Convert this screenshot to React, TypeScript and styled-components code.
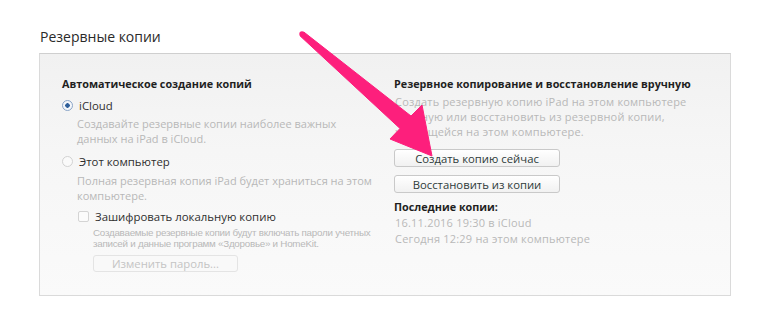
import React from 'react';
import styled, {createGlobalStyle} from 'styled-components';

const GlobalStyle = createGlobalStyle`
  html, body {
    margin: 0;
    padding: 0;
    background: #ffffff;
  }
  body {
    font-family: 'Open Sans', 'Noto Sans', sans-serif;
    color: #2b2b2b;
  }
`;

const Page = styled.div`
  position: relative;
  width: 770px;
  height: 330px;
  padding: 29px 0 0 39px;
  box-sizing: border-box;
  overflow: hidden;
`;

const PageTitle = styled.div`
  padding-left: 1px;
  font-size: 14px;
  line-height: 16px;
  color: #2a2a2a;
  margin-bottom: 8px;
`;

const Panel = styled.div`
  width: 692px;
  height: 243px;
  box-sizing: border-box;
  border: 1px solid #dadada;
  border-top-color: #cfcfcf;
  background: linear-gradient(180deg, #f1f1f1 0%, #f6f6f6 40%, #fafafa 100%);
  display: grid;
  grid-template-columns: 332px 1fr;
  padding: 22px 0 0 22px;
`;

const Column = styled.div`
  display: flex;
  flex-direction: column;
  align-items: flex-start;
`;

const Heading = styled.div<{$gap?: number}>`
  font-size: 10.8px;
  font-weight: bold;
  line-height: 15px;
  color: #1f1f1f;
  margin-top: ${(p) => p.$gap ?? 0}px;
  white-space: nowrap;
`;

const OptionRow = styled.div<{$gap: number; $indent?: number}>`
  display: flex;
  align-items: center;
  gap: 6px;
  margin-top: ${(p) => p.$gap}px;
  margin-left: ${(p) => p.$indent ?? 0}px;
  font-size: 11.4px;
  line-height: 15px;
  color: #2f2f2f;
`;

const Radio = styled.span<{$checked?: boolean}>`
  width: 9px;
  height: 9px;
  border-radius: 50%;
  border: 1px solid ${(p) => (p.$checked ? '#8aa5c8' : '#d2d2d2')};
  background: ${(p) =>
    p.$checked ? 'radial-gradient(circle, #2f5f9a 0 2px, #f4f6fa 2.5px)' : '#fafafa'};
  box-sizing: content-box;
  flex: none;
`;

const Checkbox = styled.span`
  width: 9px;
  height: 9px;
  border: 1px solid #d4d4d4;
  border-radius: 2px;
  background: #fbfbfb;
  flex: none;
`;

const Description = styled.div<{$gap: number; $indent?: number}>`
  margin-top: ${(p) => p.$gap}px;
  margin-left: ${(p) => p.$indent ?? 0}px;
  font-size: 11px;
  line-height: 15px;
  color: #b8b8b8;
  white-space: nowrap;
`;

const SmallNote = styled.div`
  margin-top: 3px;
  margin-left: 31px;
  font-family: 'Liberation Sans', Arial, sans-serif;
  font-size: 9.8px;
  line-height: 11px;
  letter-spacing: -0.25px;
  color: #b8b8b8;
  white-space: nowrap;
`;

const Button = styled.div<{
  $width: number;
  $gap: number;
  $indent?: number;
  $disabled?: boolean;
}>`
  width: ${(p) => p.$width}px;
  height: ${(p) => (p.$disabled ? 17 : 18)}px;
  box-sizing: border-box;
  margin-top: ${(p) => p.$gap}px;
  margin-left: ${(p) => p.$indent ?? 0}px;
  border: 1px solid ${(p) => (p.$disabled ? '#e4e4e4' : '#c9c9c9')};
  border-radius: 3px;
  background: ${(p) =>
    p.$disabled ? '#f9f9f9' : 'linear-gradient(180deg, #ffffff 0%, #f1f1f1 100%)'};
  display: flex;
  align-items: center;
  justify-content: center;
  font-size: 11.3px;
  color: ${(p) => (p.$disabled ? '#c4c4c4' : '#2e3b3a')};
`;

const RightText = styled.div<{$gap: number; $muted?: boolean; $line?: number}>`
  margin-top: ${(p) => p.$gap}px;
  padding-left: 1px;
  font-size: 11px;
  line-height: ${(p) => p.$line ?? 15}px;
  letter-spacing: 0.2px;
  color: ${(p) => (p.$muted ? '#b8b8b8' : '#2b2b2b')};
  white-space: nowrap;
`;

const ArrowLayer = styled.svg`
  position: absolute;
  left: 0;
  top: 0;
  pointer-events: none;
`;

const PinkArrow = () => (
  <ArrowLayer width="770" height="330" viewBox="0 0 770 330">
    <circle cx="302" cy="34" r="2.7" fill="#fd1f7c" />
    <polygon
      points="303.8,32 411,116 422,105 432,156 390,139 400,128.5 300.2,36"
      fill="#fd1f7c"
      stroke="#fd1f7c"
      strokeWidth="1"
      strokeLinejoin="round"
    />
  </ArrowLayer>
);

export default function App() {
  return (
    <Page>
      <GlobalStyle />
      <PageTitle>Резервные копии</PageTitle>
      <Panel>
        <Column>
          <Heading>Автоматическое создание копий</Heading>
          <OptionRow $gap={7}>
            <Radio $checked />
            <span>iCloud</span>
          </OptionRow>
          <Description $gap={3} $indent={15}>
            Создавайте резервные копии наиболее важных
            <br />
            данных на iPad в iCloud.
          </Description>
          <OptionRow $gap={8}>
            <Radio />
            <span>Этот компьютер</span>
          </OptionRow>
          <Description $gap={4} $indent={15}>
            Полная резервная копия iPad будет храниться на этом
            <br />
            компьютере.
          </Description>
          <OptionRow $gap={6} $indent={16}>
            <Checkbox />
            <span>Зашифровать локальную копию</span>
          </OptionRow>
          <SmallNote>
            Создаваемые резервные копии будут включать пароли учетных
            <br />
            записей и данные программ «Здоровье» и HomeKit.
          </SmallNote>
          <Button $width={145} $gap={6} $indent={31} $disabled>
            Изменить пароль...
          </Button>
        </Column>
        <Column>
          <Heading>Резервное копирование и восстановление вручную</Heading>
          <RightText $gap={3} $muted>
            Создать резервную копию iPad на этом компьютере
            <br />
            вручную или восстановить из резервной копии,
            <br />
            хранящейся на этом компьютере.
          </RightText>
          <Button $width={166} $gap={10}>
            Создать копию сейчас
          </Button>
          <Button $width={166} $gap={8}>
            Восстановить из копии
          </Button>
          <Heading $gap={6}>Последние копии:</Heading>
          <RightText $gap={1} $line={16} $muted>
            16.11.2016 19:30 в iCloud
            <br />
            Сегодня 12:29 на этом компьютере
          </RightText>
        </Column>
      </Panel>
      <PinkArrow />
    </Page>
  );
}
